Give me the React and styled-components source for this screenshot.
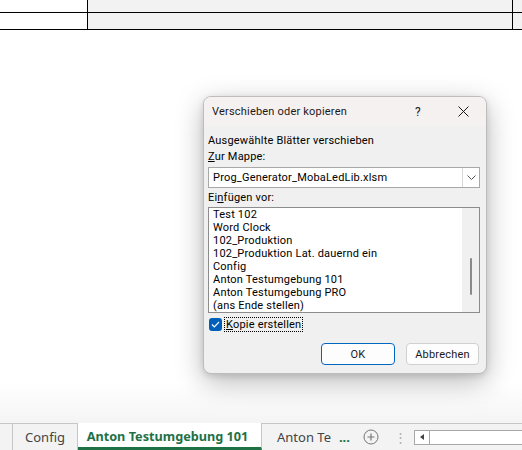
import React from "react";
import styled, { createGlobalStyle } from "styled-components";

const GlobalStyle = createGlobalStyle`
  html, body {
    margin: 0;
    padding: 0;
    background: #ffffff;
  }
  body {
    font-family: "Noto Sans", "Open Sans", Arial, sans-serif;
    font-size: 11px;
    color: #000;
  }
`;

// ganze Arbeitsfläche
const Screen = styled.div`
  position: relative;
  width: 522px;
  height: 450px;
  overflow: hidden;
  display: flex;
  flex-direction: column;
  background: #ffffff;
`;

// Zellenraster oben
const Grid = styled.div`
  display: grid;
  grid-template-columns: 88px 425px 1fr;
`;

const Cell = styled.div`
  height: ${(p) => p.$h}px;
  background: ${(p) => (p.$shaded ? "#f2f2f2" : "#ffffff")};
  border-bottom: 1px solid #000;
  border-right: ${(p) => (p.$last ? "none" : "1px solid #000")};
`;

const Sheet = styled.div`
  flex: 1;
  background: linear-gradient(to bottom, #ffffff 0%, #ffffff 90%, #f4f4f4 100%);
`;

// Dialogfenster
const Dialog = styled.div`
  position: absolute;
  left: 203px;
  top: 96px;
  width: 284px;
  height: 278px;
  box-sizing: border-box;
  border: 1px solid #bdbdbd;
  border-radius: 8px;
  background: #f0f0f0;
  box-shadow: 0 8px 28px rgba(0, 0, 0, 0.28), 0 2px 6px rgba(0, 0, 0, 0.12);
  overflow: hidden;
  display: flex;
  flex-direction: column;
  font-family: Roboto, "Noto Sans", Arial, sans-serif;
  letter-spacing: 0.2px;
`;

const TitleBar = styled.div`
  height: 29px;
  display: flex;
  align-items: center;
  padding-left: 8px;
  background: #f6f1f1;
`;

const Title = styled.span`
  flex: 1;
  font-size: 11px;
  color: #1a1a1a;
`;

const TitleButton = styled.div`
  width: ${(p) => p.$w}px;
  height: 29px;
  display: flex;
  align-items: center;
  justify-content: center;
  font-size: 12px;
  color: #1a1a1a;
`;

const Body = styled.div`
  flex: 1;
  display: flex;
  flex-direction: column;
  padding: 4px 6px 0 4px;
`;

const Label = styled.div`
  height: 16px;
  line-height: 16px;
  color: #000;
  margin-top: ${(p) => p.$mt || 0}px;

  u {
    text-decoration: underline;
    text-underline-offset: 1px;
  }
`;

const Select = styled.div`
  margin-top: 2px;
  height: 21px;
  box-sizing: border-box;
  border: 1px solid #a8a8a8;
  background: #fff;
  display: flex;
  align-items: stretch;
`;

const SelectValue = styled.div`
  flex: 1;
  display: flex;
  align-items: center;
  padding-left: 4px;
`;

const SelectArrow = styled.div`
  width: 16px;
  border-left: 1px solid #d6d6d6;
  display: flex;
  align-items: center;
  justify-content: center;
`;

const ListBox = styled.div`
  margin-top: 1px;
  height: 106px;
  box-sizing: border-box;
  border: 1px solid #8c8c8c;
  background: #fff;
  display: flex;
`;

const Items = styled.div`
  flex: 1;
  padding: 0 0 0 4px;
  display: flex;
  flex-direction: column;
`;

const Item = styled.div`
  height: 13px;
  line-height: 13px;
  white-space: nowrap;
`;

const ScrollTrack = styled.div`
  width: 17px;
  background: #f0f0f0;
  display: flex;
  justify-content: center;
  padding-top: 50px;
  box-sizing: border-box;
`;

const ScrollThumb = styled.div`
  width: 2px;
  height: 37px;
  border-radius: 1px;
  background: #8a8a8a;
`;

const CheckRow = styled.div`
  margin-top: 5px;
  display: flex;
  align-items: center;
  gap: 3px;
  padding-left: 1px;
`;

const CheckBox = styled.div`
  width: 13px;
  height: 13px;
  border-radius: 3px;
  background: #005fb8;
  display: flex;
  align-items: center;
  justify-content: center;
`;

const CheckLabel = styled.span`
  line-height: 13px;
  padding: 0 1px;
  outline: 1px dotted #000;

  u {
    text-decoration: underline;
  }
`;

const Buttons = styled.div`
  margin-top: 12px;
  display: flex;
  justify-content: flex-end;
  gap: 11px;
  padding-right: 1px;
`;

const Button = styled.div`
  width: ${(p) => p.$w}px;
  height: 22px;
  box-sizing: border-box;
  border-radius: 4px;
  border: 1px solid ${(p) => (p.$primary ? "#0067c0" : "#d0d0d0")};
  background: #fdfdfd;
  display: flex;
  align-items: center;
  justify-content: center;
  color: #1a1a1a;
`;

// Blattregister unten
const TabBar = styled.div`
  height: 27px;
  display: flex;
  align-items: stretch;
  background: #f3f3f3;
  font-size: 13px;
`;

const TabLead = styled.div`
  width: 12px;
  border-top: 1px solid #c6c6c6;
  border-right: 1px solid #c6c6c6;
`;

const Tab = styled.div`
  width: ${(p) => p.$w}px;
  box-sizing: border-box;
  display: flex;
  align-items: center;
  padding-left: ${(p) => p.$pl || 0}px;
  justify-content: ${(p) => (p.$pl ? "flex-start" : "center")};
  color: #444;
  border-top: 1px solid #c6c6c6;
  border-right: ${(p) => (p.$divider ? "1px solid #c6c6c6" : "none")};
`;

const ActiveTab = styled.div`
  width: 184px;
  box-sizing: border-box;
  display: flex;
  align-items: center;
  justify-content: center;
  background: #ffffff;
  border-bottom: 3px solid #1e7145;
  border-right: 1px solid #c6c6c6;
  padding-top: 2px;
  padding-right: 4px;
  font-size: 12.7px;
  font-weight: 700;
  color: #1e7145;
`;

const More = styled.span`
  margin-left: 8px;
  color: #1e7145;
  font-weight: 700;
`;

const Tools = styled.div`
  flex: 1;
  display: flex;
  align-items: center;
  border-top: 1px solid #c6c6c6;
  padding-left: 1px;
`;

const Dots = styled.span`
  margin-left: 15px;
  color: #b0b0b0;
  font-size: 13px;
`;

const HScroll = styled.div`
  flex: 1;
  height: 13px;
  margin-left: 7px;
  border: 1px solid #a8a8a8;
  border-right: none;
  background: #fff;
  display: flex;
`;

const ScrollArrow = styled.div`
  width: 14px;
  border-right: 1px solid #a8a8a8;
  display: flex;
  align-items: center;
  justify-content: center;
`;

const sheets = [
  "Test 102",
  "Word Clock",
  "102_Produktion",
  "102_Produktion Lat. dauernd ein",
  "Config",
  "Anton Testumgebung 101",
  "Anton Testumgebung PRO",
  "(ans Ende stellen)",
];

const App = () => {
  return (
    <Screen>
      <GlobalStyle />
      <Grid>
        <Cell $h={12} />
        <Cell $h={12} $shaded />
        <Cell $h={12} $shaded $last />
        <Cell $h={16} />
        <Cell $h={16} $shaded />
        <Cell $h={16} $shaded $last />
      </Grid>
      <Sheet />

      <Dialog>
        <TitleBar>
          <Title>Verschieben oder kopieren</Title>
          <TitleButton $w={44}>?</TitleButton>
          <TitleButton $w={46}>
            <svg width="11" height="11" viewBox="0 0 11 11">
              <path d="M0.5 0.5 L10.5 10.5 M10.5 0.5 L0.5 10.5" stroke="#1a1a1a" strokeWidth="1" />
            </svg>
          </TitleButton>
        </TitleBar>
        <Body>
          <Label $mt={3}>Ausgewählte Blätter verschieben</Label>
          <Label>
            <u>Z</u>ur Mappe:
          </Label>
          <Select>
            <SelectValue>Prog_Generator_MobaLedLib.xlsm</SelectValue>
            <SelectArrow>
              <svg width="9" height="5" viewBox="0 0 9 5">
                <path d="M0.5 0.5 L4.5 4.5 L8.5 0.5" fill="none" stroke="#555" strokeWidth="1" />
              </svg>
            </SelectArrow>
          </Select>
          <Label $mt={2}>
            Ei<u>n</u>fügen vor:
          </Label>
          <ListBox>
            <Items>
              {sheets.map((s) => (
                <Item key={s}>{s}</Item>
              ))}
            </Items>
            <ScrollTrack>
              <ScrollThumb />
            </ScrollTrack>
          </ListBox>
          <CheckRow>
            <CheckBox>
              <svg width="9" height="7" viewBox="0 0 9 7">
                <path d="M1 3.5 L3.3 5.8 L8 1" fill="none" stroke="#fff" strokeWidth="1.2" />
              </svg>
            </CheckBox>
            <CheckLabel>
              <u>K</u>opie erstellen
            </CheckLabel>
          </CheckRow>
          <Buttons>
            <Button $w={74} $primary>OK</Button>
            <Button $w={73}>Abbrechen</Button>
          </Buttons>
        </Body>
      </Dialog>

      <TabBar>
        <TabLead />
        <Tab $w={65} $divider>Config</Tab>
        <ActiveTab>Anton Testumgebung 101</ActiveTab>
        <Tab $w={100} $pl={15}>
          Anton Te<More>...</More>
        </Tab>
        <Tools>
          <svg width="16" height="16" viewBox="0 0 16 16">
            <circle cx="8" cy="8" r="7" fill="none" stroke="#777" strokeWidth="1" />
            <path d="M8 4.5 V11.5 M4.5 8 H11.5" stroke="#777" strokeWidth="1.2" />
          </svg>
          <Dots>⋮</Dots>
          <HScroll>
            <ScrollArrow>
              <svg width="4" height="6" viewBox="0 0 4 6">
                <path d="M4 0 L0 3 L4 6 Z" fill="#444" />
              </svg>
            </ScrollArrow>
          </HScroll>
        </Tools>
      </TabBar>
    </Screen>
  );
};

export default App;
